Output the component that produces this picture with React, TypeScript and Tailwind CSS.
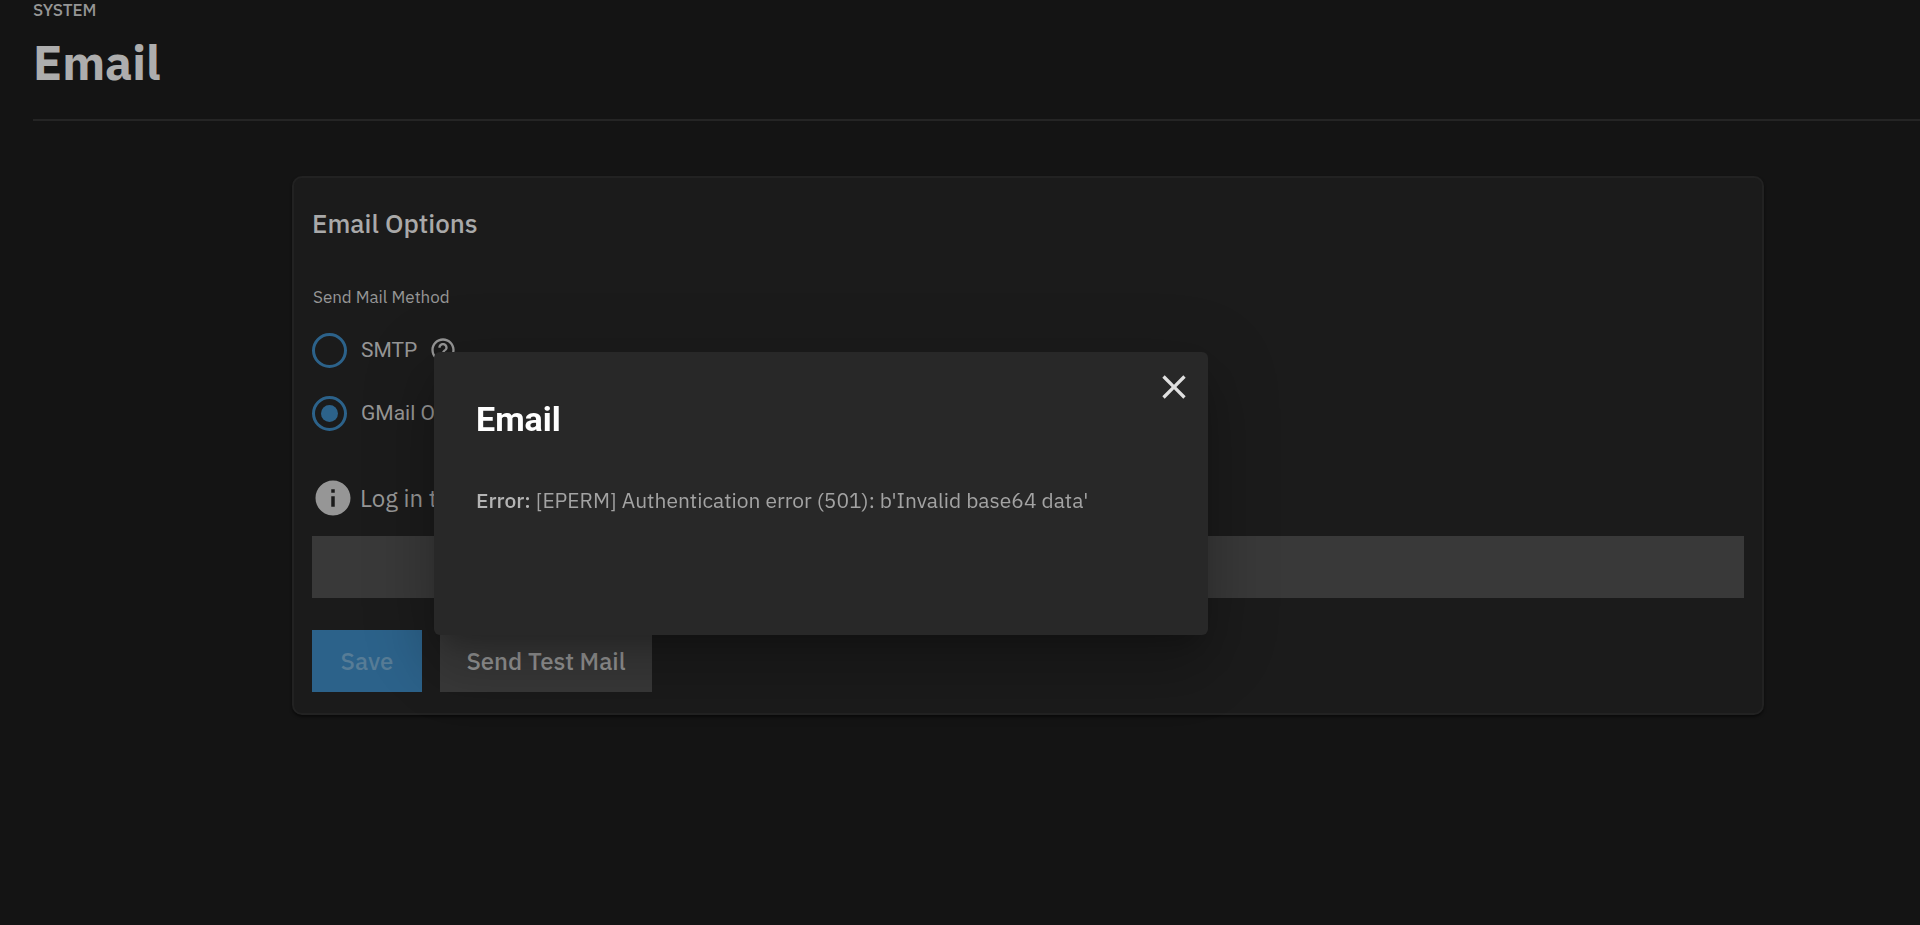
import { useState } from "react";
import { MdClose, MdHelpOutline, MdInfo } from "react-icons/md";

type SendMethod = "smtp" | "gmail";

const METHODS: { value: SendMethod; label: string; help?: string }[] = [
  { value: "smtp", label: "SMTP", help: "SMTP configuration" },
  { value: "gmail", label: "GMail OAuth" },
];

function ErrorDialog({ message, onClose }: { message: string; onClose: () => void }) {
  return (
    <div className="fixed inset-0 pt-[352px] pr-8 pl-[434px]">
      <div
        role="dialog"
        aria-modal="true"
        aria-labelledby="dialog-title"
        className="min-h-[283px] max-w-[774px] rounded-md bg-[#282828] px-[42px] pt-[15px] shadow-[0_16px_22px_-10px_rgba(0,0,0,0.2),0_36px_57px_4px_rgba(0,0,0,0.14),0_14px_69px_12px_rgba(0,0,0,0.12)]"
      >
        <div className="-mr-7 flex justify-end">
          <button type="button" onClick={onClose} aria-label="Close" className="text-[#e0e0e0]">
            <MdClose size={40} />
          </button>
        </div>
        <h2 id="dialog-title" className="font-[Roboto,sans-serif] text-[34px] leading-6 font-bold text-white">
          Email
        </h2>
        <p className="mt-[53px] text-[21px] leading-8 text-[#a3a3a3]">
          <strong className="font-medium text-[#b4b4b4]">Error:</strong> {message}
        </p>
      </div>
    </div>
  );
}

export default function App() {
  const [method, setMethod] = useState<SendMethod>("gmail");
  const [error, setError] = useState<string | null>(
    "[EPERM] Authentication error (501): b'Invalid base64 data'"
  );

  return (
    <div className="min-h-screen bg-[#141414] font-['IBM_Plex_Sans',Roboto,sans-serif] text-[#969696]">
      <header className="ml-[33px] h-[121px] border-b-2 border-[#252525]">
        <div className="text-[17px] leading-5 font-medium">SYSTEM</div>
        <h1 className="mt-2 text-[48px] leading-[68px] font-bold text-[#adadad]">Email</h1>
      </header>

      <main className="mt-[55px] mr-[156px] ml-[292px] rounded-[10px] border-2 border-[#222222] bg-[#1b1b1b] px-[18px] pt-[25px] pb-[21px] shadow-[0_2px_3px_rgba(0,0,0,0.5)]">
        <form onSubmit={(e) => e.preventDefault()}>
          <h2 className="text-[26px] leading-10 font-medium text-[#a9a9a9]">Email Options</h2>

          <fieldset>
            <legend className="px-px pt-[46px] text-[17px] leading-4">Send Mail Method</legend>
            {METHODS.map(({ value, label, help }) => (
              <div key={value} className="flex h-[63px] items-end">
                <label className="flex items-center gap-[14px] font-[Roboto,sans-serif] text-[21px] leading-9">
                  <input
                    type="radio"
                    name="method"
                    value={value}
                    checked={method === value}
                    onChange={() => setMethod(value)}
                    className="grid size-[35px] shrink-0 appearance-none place-content-center rounded-full border-3 border-[#2c628a] before:size-[17px] before:rounded-full checked:before:bg-[#2c628a]"
                  />
                  {label}
                </label>
                {help && (
                  <button type="button" aria-label={help} className="mb-1 ml-3">
                    <MdHelpOutline size={28} />
                  </button>
                )}
              </div>
            ))}
          </fieldset>

          <div className="mt-[46px] flex items-center gap-[6px] text-2xl leading-10">
            <MdInfo size={42} className="shrink-0" />
            <span>Log in to</span>
          </div>
          <button
            type="button"
            aria-label="Log in to Gmail"
            className="mt-[17px] block h-[62px] w-full bg-[#393939]"
          />

          <div className="mt-8 flex gap-[18px] text-2xl font-medium">
            <button type="submit" className="h-[62px] w-[110px] bg-[#2c628a] text-[#577c96]">
              Save
            </button>
            <button type="button" className="h-[62px] w-[212px] bg-[#393939]">
              Send Test Mail
            </button>
          </div>
        </form>
      </main>

      {error && <ErrorDialog message={error} onClose={() => setError(null)} />}
    </div>
  );
}
